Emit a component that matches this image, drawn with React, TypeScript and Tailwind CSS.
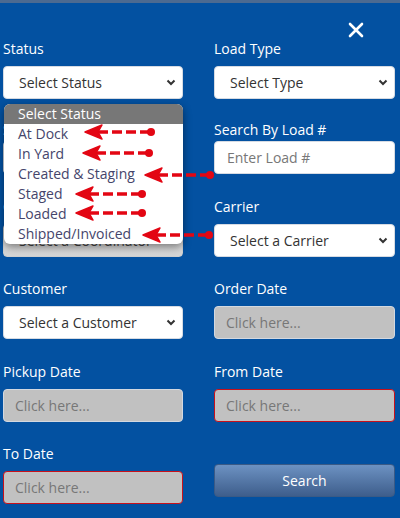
import React from "react";

const font = { fontFamily: '"Open Sans", "Liberation Sans", sans-serif' };

function Chevron() {
  return (
    <svg width="10" height="7" viewBox="0 0 10 7" className="shrink-0">
      <path d="M1.5 1.5 L5 5 L8.5 1.5" fill="none" stroke="#333" strokeWidth="2" />
    </svg>
  );
}

function Select({ text, muted }: { text: string; muted?: boolean }) {
  return (
    <div
      className={
        "h-[33px] w-full rounded-[4px] border flex items-center pl-[15px] pr-[6px] justify-between text-[14px] " +
        (muted
          ? "bg-gradient-to-b from-[#e6e6e6] to-[#d6d6d6] border-[#cfcfcf] text-[#444]"
          : "bg-white border-[#d6dbe3] text-[#333]")
      }
    >
      <span>{text}</span>
      <Chevron />
    </div>
  );
}

function DateInput({ red }: { red?: boolean }) {
  return (
    <div
      className={
        "h-[33px] w-full rounded-[4px] border bg-[#c1c1c1] flex items-center pl-[11px] text-[14px] text-[#777] " +
        (red ? "border-[#c8101a]" : "border-[#d3d8e0]")
      }
    >
      Click here...
    </div>
  );
}

function Label({ children }: { children?: React.ReactNode }) {
  return <div className="h-5 leading-5 text-[14px] text-white">{children}</div>;
}

function Arrow({ tip, y, dot }: { tip: number; y: number; dot: number }) {
  return (
    <g>
      <line x1={tip + 13} y1={y} x2={dot} y2={y} stroke="#e30613" strokeWidth="3.5" strokeDasharray="10 4" />
      <polygon
        points={`${tip},${y} ${tip + 17},${y - 7} ${tip + 13},${y} ${tip + 17},${y + 7}`}
        fill="#e30613"
        stroke="#e30613"
        strokeWidth="1.5"
        strokeLinejoin="round"
      />
      <circle cx={dot} cy={y} r="4" fill="#e30613" />
    </g>
  );
}

const statuses = ["At Dock", "In Yard", "Created & Staging", "Staged", "Loaded", "Shipped/Invoiced"];

export default function App() {
  return (
    <main
      style={font}
      className="relative h-[518px] w-[400px] overflow-hidden bg-[#0351a1] border-t-[3px] border-[#4c6a91]"
    >
      <div className="h-[36px] flex justify-end pr-[36px] pt-[19px]">
        <svg width="16" height="16" viewBox="0 0 16 16">
          <path d="M2 2 L14 14 M14 2 L2 14" stroke="white" strokeWidth="2.6" strokeLinecap="round" />
        </svg>
      </div>

      <div className="grid grid-cols-[180px_181px] gap-x-[31px] pl-[3px] pr-[5px]">
        {/* row 1 */}
        <div className="relative">
          <Label>Status</Label>
          <div className="mt-[7px]">
            <Select text="Select Status" />
          </div>
          <div className="absolute left-[1px] top-[65px] z-10 w-[179px] rounded-[6px] bg-white overflow-hidden shadow-[0_3px_8px_rgba(0,0,0,0.45)] text-[14px]">
            <div className="h-5 leading-5 bg-[#777] text-white pl-[14px]">Select Status</div>
            {statuses.map((s) => (
              <div key={s} className="h-5 leading-5 pl-[14px] text-[#45456b]">
                {s}
              </div>
            ))}
          </div>
        </div>
        <div>
          <Label>Load Type</Label>
          <div className="mt-[7px]">
            <Select text="Select Type" />
          </div>
        </div>

        {/* row 2 */}
        <div className="mt-[21px]">
          <Label>Shipper</Label>
          <div className="mt-[1px]">
            <Select text="Select a Shipper" />
          </div>
        </div>
        <div className="mt-[21px]">
          <Label>Search By Load #</Label>
          <div className="mt-[1px] h-[33px] rounded-[4px] border border-[#d6dbe3] bg-white flex items-center pl-[12px] text-[14px] text-[#777]">
            Enter Load #
          </div>
        </div>

        {/* row 3 */}
        <div className="mt-[23px]">
          <Label>Coordinator</Label>
          <div className="mt-[7px]">
            <Select text="Select a Coordinator" muted />
          </div>
        </div>
        <div className="mt-[23px]">
          <Label>Carrier</Label>
          <div className="mt-[7px]">
            <Select text="Select a Carrier" />
          </div>
        </div>

        {/* row 4 */}
        <div className="mt-[22px]">
          <Label>Customer</Label>
          <div className="mt-[7px]">
            <Select text="Select a Customer" />
          </div>
        </div>
        <div className="mt-[22px]">
          <Label>Order Date</Label>
          <div className="mt-[7px]">
            <DateInput />
          </div>
        </div>

        {/* row 5 */}
        <div className="mt-[23px]">
          <Label>Pickup Date</Label>
          <div className="mt-[7px]">
            <DateInput />
          </div>
        </div>
        <div className="mt-[23px]">
          <Label>From Date</Label>
          <div className="mt-[7px]">
            <DateInput red />
          </div>
        </div>

        {/* row 6 */}
        <div className="mt-[22px]">
          <Label>To Date</Label>
          <div className="mt-[7px]">
            <DateInput red />
          </div>
        </div>
        <div className="mt-[42px]">
          <button className="h-[33px] w-full rounded-[4px] border border-[#3a5a86] bg-gradient-to-b from-[#6d92c2] to-[#3e5e8c] text-white text-[14px]">
            Search
          </button>
        </div>
      </div>

      <svg className="absolute left-0 top-[-3px] z-20 pointer-events-none" width="400" height="518">
        <Arrow tip={85} y={132} dot={151} />
        <Arrow tip={83} y={153} dot={149} />
        <Arrow tip={145} y={175} dot={210} />
        <Arrow tip={76} y={194} dot={142} />
        <Arrow tip={76} y={213} dot={142} />
        <Arrow tip={143} y={235} dot={209} />
      </svg>
    </main>
  );
}
